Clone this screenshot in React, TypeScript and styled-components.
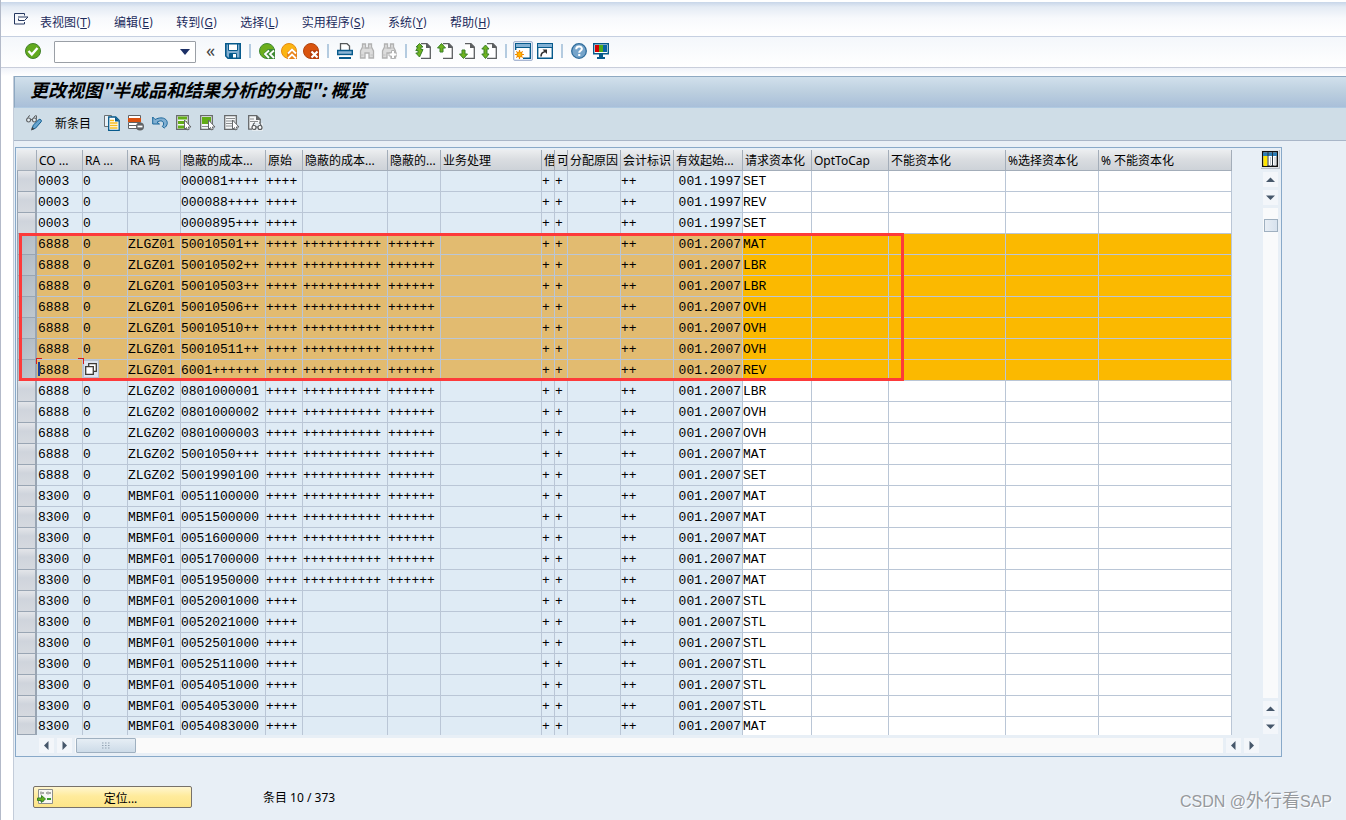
import React from "react";
import styled, { createGlobalStyle, css } from "styled-components";

const GlobalStyle = createGlobalStyle`
  *, *::before, *::after { box-sizing: border-box; }
  body { margin: 0; background: #e8eff6; }
  button, input { font: inherit; color: inherit; }
`;

const Page = styled.div`
  display: flex;
  flex-direction: column;
  min-height: 100vh;
  border-left: 1px solid #b3bac9;
  background: #fff;
  color: #000;
  font: 12px/16px "Noto Sans", "Noto Sans CJK SC", sans-serif;
`;

const MenuBar = styled.nav`
  display: flex;
  align-items: center;
  gap: 23px;
  height: 37px;
  padding: 8px 13px 0;
  border-top: 2px solid #fff;
  border-bottom: 1px solid #c6d0e1;
  background: linear-gradient(#c8d6e9 0, #e4ebf4 5px, #f7f9fc 16px, #fff 32px);
`;

const MenuItem = styled.button`
  padding: 0;
  border: 0;
  background: none;
  color: #1c2b5c;
  font-family: "DejaVu Sans Condensed", "Noto Sans CJK SC", sans-serif;
  white-space: nowrap;
`;

const ExitButton = styled(MenuItem)`
  display: flex;
  margin-right: -12px;
  margin-bottom: 8px;
`;

const StandardBar = styled.div`
  display: flex;
  align-items: center;
  gap: 6px;
  height: 31px;
  padding: 0 24px 2px;
  border-bottom: 1px solid #c9cedb;
  background: linear-gradient(#f4f7fb, #fff);
`;

const IconButton = styled.button<{ $boxed?: boolean }>`
  display: flex;
  flex: none;
  padding: 0;
  border: 0;
  background: none;
  ${(p) =>
    p.$boxed &&
    css`
      padding: 1px;
      border: 1px solid #a9b7d3;
      border-radius: 2px;
      background: #dde5f2;
      margin: 0 -2px;
    `}
`;

const Separator = styled.span`
  flex: none;
  width: 2px;
  height: 14px;
  margin: 0 2px;
  background: #b4cbe0;
`;

const CommandBox = styled.div`
  display: flex;
  align-items: center;
  width: 142px;
  height: 22px;
  margin: 1px 0 0 7px;
  border: 1px solid #9a9fa6;
  border-radius: 1px;
  background: #fff;
`;

const CommandInput = styled.input`
  flex: 1;
  min-width: 0;
  height: 18px;
  padding: 0 3px;
  border: 0;
  outline: 0;
  background: none;
`;

const Dropdown = styled.button`
  display: flex;
  width: 20px;
  padding: 0 5px;
  border: 0;
  background: none;
`;

const Chevrons = styled.button`
  width: 17px;
  padding: 0 0 2px;
  border: 0;
  background: none;
  color: #444;
  font-size: 18px;
  text-align: center;
`;

const Strip = styled.div`
  height: 8px;
  background: linear-gradient(#f0f3f9, #fff);
`;

const Content = styled.main`
  display: flex;
  flex: 1;
  flex-direction: column;
  margin-left: 12px;
  border-left: 1px solid #c3ccd9;
  background: #e8eff6;
`;

const TitleBar = styled.h1`
  height: 32px;
  margin: 0;
  padding: 0 15px;
  border: 1px solid #8ea9c2;
  border-right: 0;
  border-bottom-color: #b0cae2;
  background: linear-gradient(#d1e0ec, #bccfdf 50%, #a9bfd9);
  font: italic bold 18px/24px "Noto Sans CJK SC", sans-serif;
  white-space: nowrap;
`;

const AppBar = styled.div`
  display: flex;
  align-items: center;
  gap: 8px;
  height: 33px;
  padding: 0 12px 3px;
  border-bottom: 1px solid #a9b6c8;
  background: #cfdde7;
`;

const TextButton = styled.button`
  margin: 3px 5px 0 5px;
  padding: 0;
  border: 0;
  background: none;
`;

const TablePanel = styled.section`
  display: grid;
  grid-template-columns: minmax(0, 1fr) 18px;
  margin: 6px 64px 0 1px;
  padding: 2px 1px 3px;
  border: 1px solid #88a9c9;
`;

const TableArea = styled.div`
  position: relative;
  margin-right: 30px;
`;

const Table = styled.table`
  width: 100%;
  table-layout: fixed;
  border-collapse: separate;
  border-spacing: 0;
`;

const HeadCell = styled.th`
  height: 21px;
  padding: 2px 0 0 2px;
  overflow: hidden;
  border-right: 1px solid #a3adb9;
  border-bottom: 1px solid #a3adb9;
  background: linear-gradient(#eceef0, #d9dce0 50%, #cdd2d8);
  font-weight: normal;
  line-height: 18px;
  text-align: left;
  white-space: nowrap;
`;

const Row = styled.tr`
  height: 21px;
  &:last-child { height: 18px; }
  &:last-child > td { height: 18px; border-bottom: 0; line-height: 16px; }
`;

const Cell = styled.td<{ $keyField?: boolean; $marked?: boolean; $right?: boolean }>`
  position: relative;
  height: 21px;
  padding: 1px 1px 0 0;
  border-right: 1px solid #bac6d6;
  border-bottom: 1px solid #bac6d6;
  background: ${(p) =>
    p.$marked ? (p.$keyField ? "#e2bb70" : "#fbb900") : p.$keyField ? "#dfebf5" : "#fff"};
  font: 13px/18px "Liberation Mono", monospace;
  text-align: ${(p) => (p.$right ? "right" : "left")};
  white-space: nowrap;
  &:nth-child(2) { padding-left: 1px; }
`;

const SelectorCell = styled.td`
  padding: 0;
`;

const Selector = styled.button<{ $marked?: boolean }>`
  display: block;
  width: 100%;
  height: 21px;
  padding: 0;
  border: 1px solid #99a5b3;
  border-width: 0 2px 1px 1px;
  background: ${(p) =>
    p.$marked
      ? "linear-gradient(135deg, #aeb8c2, #c0c8cf)"
      : "linear-gradient(#e3e5e9, #cfd4dc 40%, #d5d9df)"};
  tr:last-child & { height: 18px; }
`;

const Annotation = styled.div`
  position: absolute;
  z-index: 2;
  top: 83px;
  left: 2px;
  width: 885px;
  height: 148px;
  border: 3px solid #fd3a3a;
  pointer-events: none;
`;

const Focus = styled.span`
  position: absolute;
  z-index: 1;
  inset: -2px -2px auto -1px;
  height: 21px;
  pointer-events: none;
  background:
    linear-gradient(#d81c1c, #d81c1c) 0 0 / 6px 1px,
    linear-gradient(#d81c1c, #d81c1c) 0 0 / 1px 6px,
    linear-gradient(#d81c1c, #d81c1c) 100% 0 / 6px 1px,
    linear-gradient(#d81c1c, #d81c1c) 100% 0 / 1px 6px,
    linear-gradient(#1c3f94, #1c3f94) 2px 4px / 2px 14px;
  background-repeat: no-repeat;
`;

const ValueHelp = styled.button`
  position: absolute;
  top: 0;
  left: 0;
  display: flex;
  padding: 1px 0;
  border: 1px solid #b6c1d0;
  background: #dbe3ee;
`;

const VerticalBar = styled.div`
  display: flex;
  flex-direction: column;
  align-items: flex-start;
  gap: 3px;
  padding: 0 0 1px 1px;
`;

const ConfigButton = styled.button`
  display: flex;
  margin-left: -2px;
  padding: 1px;
  border: 1px solid #b7bec7;
  border-width: 0 1px 1px 0;
  background: #e1e4e8;
`;

const ArrowButton = styled.button`
  display: flex;
  flex: none;
  align-items: center;
  justify-content: center;
  width: 15px;
  height: 15px;
  padding: 0;
  border: 0;
  background: #f3f6fa;
`;

const VerticalTrack = styled.div`
  flex: 1;
  width: 15px;
  padding: 11px 0 0 1px;
  background: #f9fafb;
`;

const VerticalThumb = styled.div`
  height: 13px;
  border: 1px solid #9fb0c0;
  background: linear-gradient(90deg, #e8eef5, #d7e2ee);
`;

const HorizontalBar = styled.div`
  display: flex;
  gap: 3px;
  margin-top: 3px;
  padding: 0 3px 0 22px;
`;

const HorizontalTrack = styled.div`
  flex: 1;
  padding-left: 1px;
  background: #fafafa;
`;

const HorizontalThumb = styled.div`
  display: flex;
  align-items: center;
  justify-content: center;
  width: 60px;
  height: 15px;
  border: 1px solid #9fb0c0;
  border-radius: 1px;
  background: linear-gradient(#e6eef5, #cddbe8);
`;

const Footer = styled.footer`
  display: flex;
  align-items: flex-start;
  margin-top: 29px;
  padding: 0 14px 0 19px;
`;

const PositionButton = styled.button`
  display: flex;
  align-items: center;
  width: 159px;
  height: 22px;
  padding: 0 3px;
  border: 1px solid #77716a;
  border-radius: 2px;
  background: linear-gradient(#fff6cf, #ffeb9c 45%, #fde588);
`;

const PositionLabel = styled.span`
  flex: 1;
  padding-top: 3px;
`;

const EntryCount = styled.span`
  margin: 4px 0 0 71px;
`;

const Watermark = styled.span`
  margin: 4px 0 0 auto;
  color: #96999d;
  font: 16px/22px "Liberation Sans", "Noto Sans CJK SC", sans-serif;
  text-shadow: 1px 1px 0 #fff;
`;

const WatermarkName = styled.span`
  font-size: 18px;
`;

type Draw = { children: React.ReactNode; w?: number; h?: number };
const Svg = ({ children, w = 16, h = 16 }: Draw) => (
  <svg width={w} height={h} viewBox={`0 0 ${w} ${h}`} fill="none" aria-hidden="true">
    {children}
  </svg>
);

const ExitIcon = () => (
  <Svg w={15} h={12}>
    <path d="M10.500 2.500v-2H.5v10.500h10V9" stroke="#24365f" />
    <path d="M4 4h10L10.500 7.500H4.500V5.500" stroke="#24365f" fill="#fff" />
  </Svg>
);
const OkIcon = () => (
  <Svg>
    <circle cx="8" cy="8" r="7.500" fill="#62a91e" stroke="#43812c" />
    <path d="M3.500 8l3.300 3.500L12.500 5" stroke="#fff" strokeWidth="2.400" />
  </Svg>
);
const SaveIcon = () => (
  <Svg>
    <path d="M.8.800h14.400v14.400H3L.8 13z" fill="#82aed0" stroke="#075a8c" strokeWidth="1.600" />
    <path d="M3.500 1h9v6.500h-9z" fill="#fff" stroke="#075a8c" />
    <path d="M4.500 10.500h7v4.500h-7z" fill="#fff" stroke="#075a8c" />
    <path d="M5 11h3v4H5z" fill="#075a8c" />
  </Svg>
);
const BackIcon = () => (
  <Svg>
    <circle cx="8" cy="8" r="7.500" fill="#6cae1c" stroke="#3f8a34" />
    <path d="M8 16l-4-5L9 6h7v10z" fill="#3f8a34" />
    <path d="M10 7.500L6 11l4 4M15 7.500L11 11l4 4" stroke="#fff" strokeWidth="1.800" />
  </Svg>
);
const UpIcon = () => (
  <Svg>
    <circle cx="8" cy="8" r="7.500" fill="#fbb513" stroke="#e58a12" />
    <path d="M6 16V9l5-4 5 4v7z" fill="#e8821a" />
    <path d="M7 10.500L11 6.500l4 4M7 15.500L11 11.500l4 4" stroke="#fff" strokeWidth="1.800" />
  </Svg>
);
const CancelIcon = () => (
  <Svg>
    <circle cx="8" cy="8" r="7.500" fill="#d9540f" stroke="#b0440f" />
    <path d="M7 7h9v9H7z" fill="#b83e0c" />
    <path d="M8.500 8.500l6 6M14.500 8.500l-6 6" stroke="#fff" strokeWidth="2.200" />
  </Svg>
);
const PrintIcon = () => (
  <Svg>
    <path d="M3.500 7V.7H10L12.500 3v4" fill="#fff" stroke="#55585a" strokeWidth="1.300" />
    <path d="M.7 7.500h14.600v4H.7z" fill="#8db6d6" stroke="#075a8c" strokeWidth="1.400" />
    <path d="M2 15h12" stroke="#075a8c" strokeWidth="2" />
    <path d="M3 13h10" stroke="#fff" />
  </Svg>
);
const FindIcon = ({ plus }: { plus?: boolean }) => (
  <Svg>
    <path
      d="M3.500 1h3v4h3V1h3v3l2 4v7h-4.500v-5h-4v5H1.500V8l2-4z"
      fill="#dcdcdc"
      stroke="#b1b1b1"
      strokeWidth="1.300"
    />
    <path d="M3.500 5h3M9.500 5h3M1.500 12h3M11.500 12h3" stroke="#c0c0c0" />
    {plus && (
      <path d="M10.500 7.500h3v2.500H16v3h-2.500v2.500h-3V13H8v-3h2.500z" fill="#fff" stroke="#b1b1b1" />
    )}
  </Svg>
);
const PageIcon = ({ kind }: { kind: "first" | "prev" | "next" | "last" }) => (
  <Svg>
    <path d="M6 .7h6L15.300 4v11.300H6" fill="#fff" stroke="#5c5f61" strokeWidth="1.300" />
    <path d="M11 0v5h5z" fill="#5c5f61" />
    {kind === "first" && (
      <path
        d="M4.500 .5L8 4H6v2.500h2L4.500 14 .8 10H3V7.500H.8L3 4H1z"
        fill="#6eb21f"
        stroke="#3a8028"
      />
    )}
    {kind === "prev" && (
      <path d="M4.500 .5L8.500 5H6v4H3V5H.5z" fill="#6eb21f" stroke="#3a8028" />
    )}
    {kind === "next" && (
      <path d="M4.500 15.500L8.500 11H6V7H3v4H.5z" fill="#6eb21f" stroke="#3a8028" />
    )}
    {kind === "last" && (
      <path
        d="M4.500 2L8 6H6v5h2l-3.500 4.500L.8 11H3V6H.8z"
        fill="#6eb21f"
        stroke="#3a8028"
      />
    )}
  </Svg>
);
const SessionIcon = ({ shortcut }: { shortcut?: boolean }) => (
  <Svg>
    <path d="M.7.700h14.600v14.600H.7z" fill="#fff" stroke="#075a8c" strokeWidth="1.400" />
    <path d="M1 1h14v3H1z" fill="#83b1d4" />
    <path d="M1 4.500h14" stroke="#075a8c" />
    {shortcut ? (
      <>
        <path d="M4 13.500c0-3 1-4.500 4.500-5" stroke="#333" strokeWidth="1.600" />
        <path d="M5.500 6.500H10V11z" fill="#333" />
      </>
    ) : (
      <>
        <path d="M0 7h8v9H0z" fill="#fff" />
        <path
          d="M4.500 7v9M0 11.500h9M1.300 8.300l6.400 6.400M7.700 8.300l-6.400 6.400"
          stroke="#f08a00"
          strokeWidth="1.200"
        />
        <circle cx="4.500" cy="11.500" r="2.600" fill="#ffb400" stroke="#ee8600" />
      </>
    )}
  </Svg>
);
const HelpIcon = () => (
  <Svg>
    <circle cx="8" cy="8" r="7.300" fill="#76a4ca" stroke="#2f6c9c" strokeWidth="1.300" />
    <path d="M5.200 6.200c0-3.800 5.700-3.500 5.700-.4 0 2-2.700 1.900-2.700 4" stroke="#fff" strokeWidth="2" />
    <path d="M7.200 11h2.100v2H7.200z" fill="#fff" />
  </Svg>
);
const MonitorIcon = () => (
  <Svg>
    <path d="M.7.700h14.600v10H.7z" fill="#fff" stroke="#075a8c" strokeWidth="1.400" />
    <path d="M2 2h4v7H2z" fill="#d40000" />
    <path d="M6 2h4v7H6z" fill="#4dab1b" />
    <path d="M10 2h4v7h-4z" fill="#0a64a4" />
    <path d="M6 11h4v3h2v2H4v-2h2z" fill="#075a8c" />
  </Svg>
);

const ToggleIcon = () => (
  <Svg>
    <path d="M.8 4.500L3 .8h1M6.500 4.500L9 .8h1.500v3" stroke="#606366" />
    <circle cx="2.600" cy="5" r="2" fill="#e4edf3" stroke="#606366" strokeWidth="1.200" />
    <circle cx="8.400" cy="5" r="2" fill="#e4edf3" stroke="#606366" strokeWidth="1.200" />
    <path d="M4.500 4.500h2" stroke="#606366" />
    <path d="M6 14.500l1.200-4.300L13 4.500c1-1 3.200 1 2.200 2.200l-5.700 6.500z" fill="#6aa5cf" stroke="#0d5b8e" />
    <path d="M5 15.500l1-3.500 2.500 2z" fill="#444" />
  </Svg>
);
const CopyIcon = () => (
  <Svg>
    <path d="M.5.500h7v11h-7z" fill="#e8f0f6" stroke="#6b7073" />
    <path d="M4.700 2h7l3.500 3.500v9.800H4.700z" fill="#fff" stroke="#075a8c" strokeWidth="1.300" />
    <path d="M11 2v4.500h4.500z" fill="#075a8c" />
    <path d="M6 5.500h4M6 8h7.500M6 10.500h7.500M6 13h7.500" stroke="#f5bd1c" strokeWidth="1.300" />
  </Svg>
);
const DeleteIcon = () => (
  <Svg>
    <path d="M.5.500h12v4H.5z" fill="#fff" stroke="#606366" />
    <path d="M0 3h13v4H0z" fill="#d9500f" />
    <path d="M.5 7.500h12v6H.5z" fill="#fff" stroke="#606366" />
    <path d="M1 10.500h8" stroke="#606366" />
    <circle cx="12" cy="11.500" r="4" fill="#606366" />
    <path d="M9.500 11.500h5" stroke="#fff" strokeWidth="1.800" />
  </Svg>
);
const UndoIcon = () => (
  <Svg>
    <path
      d="M.7 2v7h6.800L5 7.300c3-2.200 6-1.700 6.500.7.300 1.500-.2 2.500-1.200 3.500l2 1.500c3.500-2.500 3.800-6.300 1.500-8.500-2.500-2.300-7-2-10.700 0z"
      fill="#80afd2"
      stroke="#1a679b"
    />
  </Svg>
);
const MarkIcon = ({ kind }: { kind: "all" | "block" | "none" }) => (
  <Svg>
    <path d="M.7.700h11.600v13.600H.7z" fill="#f5f7f8" stroke="#66696b" strokeWidth="1.300" />
    {kind === "all" && <path d="M2 3h9M2 7.500h9M2 12h9" stroke="#62ad17" strokeWidth="2.800" />}
    {kind === "block" && (
      <>
        <path d="M2 2h9v7H2z" fill="#62ad17" />
        <path d="M2 11.500h8" stroke="#8b8e90" />
      </>
    )}
    {kind === "none" && <path d="M2 3.500h9M2 6h9M2 8.500h9M2 11h9" stroke="#8b8e90" />}
    <path d="M8.500 5v9.500l2-2 1 2.500 1.800-.8-1-2.200h2.700z" fill="#fff" stroke="#66696b" />
  </Svg>
);
const DetailIcon = () => (
  <Svg>
    <path d="M.7.700h8l3.500 3.500v10H.7z" fill="#f5f7f8" stroke="#66696b" strokeWidth="1.300" />
    <path d="M8 0v5h5z" fill="#66696b" />
    <path d="M2 4h4M2 6.500h8" stroke="#8b8e90" />
    <path d="M4 8h11v8H4z" fill="#e4ebf0" />
    <path d="M4.500 11.500L6 8h1M13.500 11.500L12 8h-1" stroke="#55585a" />
    <circle cx="6" cy="12.500" r="2" fill="#fff" stroke="#55585a" strokeWidth="1.200" />
    <circle cx="12" cy="12.500" r="2" fill="#fff" stroke="#55585a" strokeWidth="1.200" />
    <path d="M8 12h2" stroke="#55585a" />
  </Svg>
);
const ColumnsIcon = () => (
  <Svg>
    <path d="M.7.700h14.600v14.600H.7z" fill="#fff" stroke="#111" strokeWidth="1.400" />
    <path d="M1 1.500h14V5H1z" fill="#2b7cb5" />
    <path d="M1.500 5h4v10h-4z" fill="#ffe600" />
    <path d="M6 1v14M10.500 1v14" stroke="#26323c" />
    <path d="M8.500 6v9M13 6v9" stroke="#bcc3c8" />
  </Svg>
);
const ValueHelpIcon = () => (
  <Svg w={14} h={14}>
    <path d="M4.700 4V1.700h7.600v7.600H10" fill="#fff" stroke="#3d3a34" strokeWidth="1.300" />
    <path d="M1.700 4.700h7.600v7.600H1.700z" fill="#fff" stroke="#3d3a34" strokeWidth="1.300" />
  </Svg>
);
const PositionIcon = () => (
  <Svg>
    <path d="M1.500.500h14v14h-14z" fill="#f8f8f4" stroke="#8d8f8c" />
    <path d="M3 4h4M9 4h5M3 12h4" stroke="#8d8f8c" strokeWidth="1.300" />
    <path d="M10 10h4" stroke="#3a9a2c" strokeWidth="2" />
    <path d="M.5 9h4V6.500L8.500 10l-4 3.500V11.500h-4z" fill="#66b01c" stroke="#39832a" />
    <path d="M4 2v4M11 2v4" stroke="#b7b8b4" />
  </Svg>
);

const arrowPaths = {
  up: "M0 7l4.500-4.500L9 7z",
  down: "M0 2.500l4.500 4.500L9 2.500z",
  left: "M6.500 0L2 4.500 6.500 9z",
  right: "M2.500 0L7 4.500 2.500 9z",
};
const Arrow = ({ to }: { to: keyof typeof arrowPaths }) => (
  <ArrowButton aria-label={to}>
    <Svg w={9} h={9}>
      <path d={arrowPaths[to]} fill="#46576a" />
    </Svg>
  </ArrowButton>
);

const menus: [string, string][] = [
  ["表视图", "T"],
  ["编辑", "E"],
  ["转到", "G"],
  ["选择", "L"],
  ["实用程序", "S"],
  ["系统", "Y"],
  ["帮助", "H"],
];

const columns: { title: string; width?: number }[] = [
  { title: "CO ...", width: 46 },
  { title: "RA ...", width: 45 },
  { title: "RA 码", width: 53 },
  { title: "隐蔽的成本...", width: 85 },
  { title: "原始", width: 37 },
  { title: "隐蔽的成本...", width: 85 },
  { title: "隐蔽的...", width: 53 },
  { title: "业务处理", width: 101 },
  { title: "借", width: 13 },
  { title: "可", width: 13 },
  { title: "分配原因", width: 53 },
  { title: "会计标识", width: 53 },
  { title: "有效起始...", width: 69 },
  { title: "请求资本化", width: 69 },
  { title: "OptToCap", width: 77 },
  { title: "不能资本化", width: 117 },
  { title: "%选择资本化", width: 93 },
  { title: "% 不能资本化" },
];
const KEY_COLUMNS = 13;
const DATE_COLUMN = 12;

type Entry = { area: string; key: string; cost: string; masked: boolean; year: string; category: string };
const entry = (area: string, key: string, cost: string, category: string, masked = true, year = "2007"): Entry => ({
  area, key, cost, category, masked, year,
});

const entries: Entry[] = [
  entry("0003", "", "000081++++", "SET", false, "1997"),
  entry("0003", "", "000088++++", "REV", false, "1997"),
  entry("0003", "", "0000895+++", "SET", false, "1997"),
  entry("6888", "ZLGZ01", "50010501++", "MAT"),
  entry("6888", "ZLGZ01", "50010502++", "LBR"),
  entry("6888", "ZLGZ01", "50010503++", "LBR"),
  entry("6888", "ZLGZ01", "50010506++", "OVH"),
  entry("6888", "ZLGZ01", "50010510++", "OVH"),
  entry("6888", "ZLGZ01", "50010511++", "OVH"),
  entry("6888", "ZLGZ01", "6001++++++", "REV"),
  entry("6888", "ZLGZ02", "0801000001", "LBR"),
  entry("6888", "ZLGZ02", "0801000002", "OVH"),
  entry("6888", "ZLGZ02", "0801000003", "OVH"),
  entry("6888", "ZLGZ02", "5001050+++", "MAT"),
  entry("6888", "ZLGZ02", "5001990100", "SET"),
  entry("8300", "MBMF01", "0051100000", "MAT"),
  entry("8300", "MBMF01", "0051500000", "MAT"),
  entry("8300", "MBMF01", "0051600000", "MAT"),
  entry("8300", "MBMF01", "0051700000", "MAT"),
  entry("8300", "MBMF01", "0051950000", "MAT"),
  entry("8300", "MBMF01", "0052001000", "STL", false),
  entry("8300", "MBMF01", "0052021000", "STL", false),
  entry("8300", "MBMF01", "0052501000", "STL", false),
  entry("8300", "MBMF01", "0052511000", "STL", false),
  entry("8300", "MBMF01", "0054051000", "STL", false),
  entry("8300", "MBMF01", "0054053000", "STL", false),
  entry("8300", "MBMF01", "0054083000", "MAT", false),
];

const FIRST_MARKED = 3;
const FOCUSED = 9;

const valuesOf = (e: Entry) => [
  e.area, "0", e.key, e.cost, "++++",
  e.masked ? "++++++++++" : "", e.masked ? "++++++" : "",
  "", "+", "+", "", "++", `001.${e.year}`, e.category, "", "", "", "",
];

export default function App() {
  return (
    <Page>
      <GlobalStyle />
      <MenuBar>
        <ExitButton aria-label="菜单"><ExitIcon /></ExitButton>
        {menus.map(([label, key]) => (
          <MenuItem key={key}>
            {label}(<u>{key}</u>)
          </MenuItem>
        ))}
      </MenuBar>
      <StandardBar>
        <IconButton aria-label="确认"><OkIcon /></IconButton>
        <CommandBox>
          <CommandInput aria-label="命令" />
          <Dropdown aria-label="历史">
            <Svg w={10} h={6}><path d="M0 0h10L5 6z" fill="#1c2f66" /></Svg>
          </Dropdown>
        </CommandBox>
        <Chevrons>«</Chevrons>
        <IconButton aria-label="保存"><SaveIcon /></IconButton>
        <Separator />
        <IconButton aria-label="返回"><BackIcon /></IconButton>
        <IconButton aria-label="退出"><UpIcon /></IconButton>
        <IconButton aria-label="取消"><CancelIcon /></IconButton>
        <Separator />
        <IconButton aria-label="打印"><PrintIcon /></IconButton>
        <IconButton aria-label="查找"><FindIcon /></IconButton>
        <IconButton aria-label="继续查找"><FindIcon plus /></IconButton>
        <Separator />
        <IconButton aria-label="首页"><PageIcon kind="first" /></IconButton>
        <IconButton aria-label="上一页"><PageIcon kind="prev" /></IconButton>
        <IconButton aria-label="下一页"><PageIcon kind="next" /></IconButton>
        <IconButton aria-label="末页"><PageIcon kind="last" /></IconButton>
        <Separator />
        <IconButton $boxed aria-label="新会话"><SessionIcon /></IconButton>
        <IconButton aria-label="快捷方式"><SessionIcon shortcut /></IconButton>
        <Separator />
        <IconButton aria-label="帮助"><HelpIcon /></IconButton>
        <IconButton aria-label="布局"><MonitorIcon /></IconButton>
      </StandardBar>
      <Strip />
      <Content>
        <TitleBar>更改视图"半成品和结果分析的分配": 概览</TitleBar>
        <AppBar>
          <IconButton aria-label="显示/更改"><ToggleIcon /></IconButton>
          <TextButton>新条目</TextButton>
          <IconButton aria-label="复制"><CopyIcon /></IconButton>
          <IconButton aria-label="删除"><DeleteIcon /></IconButton>
          <IconButton aria-label="撤销"><UndoIcon /></IconButton>
          <IconButton aria-label="全选"><MarkIcon kind="all" /></IconButton>
          <IconButton aria-label="选择块"><MarkIcon kind="block" /></IconButton>
          <IconButton aria-label="取消全选"><MarkIcon kind="none" /></IconButton>
          <IconButton aria-label="明细"><DetailIcon /></IconButton>
        </AppBar>
        <TablePanel>
          <TableArea>
            <Table>
              <colgroup>
                <col style={{ width: 20 }} />
                {columns.map((c, i) => (
                  <col key={i} style={{ width: c.width }} />
                ))}
              </colgroup>
              <thead>
                <tr>
                  <HeadCell />
                  {columns.map((c, i) => (
                    <HeadCell key={i}>{c.title}</HeadCell>
                  ))}
                </tr>
              </thead>
              <tbody>
                {entries.map((e, r) => {
                  const marked = r >= FIRST_MARKED && r <= FOCUSED;
                  return (
                    <Row key={r}>
                      <SelectorCell>
                        <Selector $marked={marked} aria-label={`选择 ${r + 1}`} />
                      </SelectorCell>
                      {valuesOf(e).map((value, c) => (
                        <Cell
                          key={c}
                          $keyField={c < KEY_COLUMNS}
                          $marked={marked}
                          $right={c === DATE_COLUMN}
                        >
                          {r === FOCUSED && c === 1 ? (
                            <ValueHelp aria-label="值帮助"><ValueHelpIcon /></ValueHelp>
                          ) : (
                            value
                          )}
                          {r === FOCUSED && c === 0 && <Focus />}
                        </Cell>
                      ))}
                    </Row>
                  );
                })}
              </tbody>
            </Table>
            <Annotation />
          </TableArea>
          <VerticalBar>
            <ConfigButton aria-label="表设置"><ColumnsIcon /></ConfigButton>
            <Arrow to="up" />
            <Arrow to="down" />
            <VerticalTrack><VerticalThumb /></VerticalTrack>
            <Arrow to="up" />
            <Arrow to="down" />
          </VerticalBar>
          <HorizontalBar>
            <Arrow to="left" />
            <Arrow to="right" />
            <HorizontalTrack>
              <HorizontalThumb>
                <Svg w={8} h={7}>
                  <path
                    d="M0 1h8M0 3.500h8M0 6h8"
                    stroke="#93a3b3"
                    strokeDasharray="1.500 1.500"
                  />
                </Svg>
              </HorizontalThumb>
            </HorizontalTrack>
            <Arrow to="left" />
            <Arrow to="right" />
          </HorizontalBar>
        </TablePanel>
        <Footer>
          <PositionButton>
            <PositionIcon />
            <PositionLabel>定位...</PositionLabel>
          </PositionButton>
          <EntryCount>条目 10 / 373</EntryCount>
          <Watermark>
            CSDN @<WatermarkName>外行看</WatermarkName>SAP
          </Watermark>
        </Footer>
      </Content>
    </Page>
  );
}
